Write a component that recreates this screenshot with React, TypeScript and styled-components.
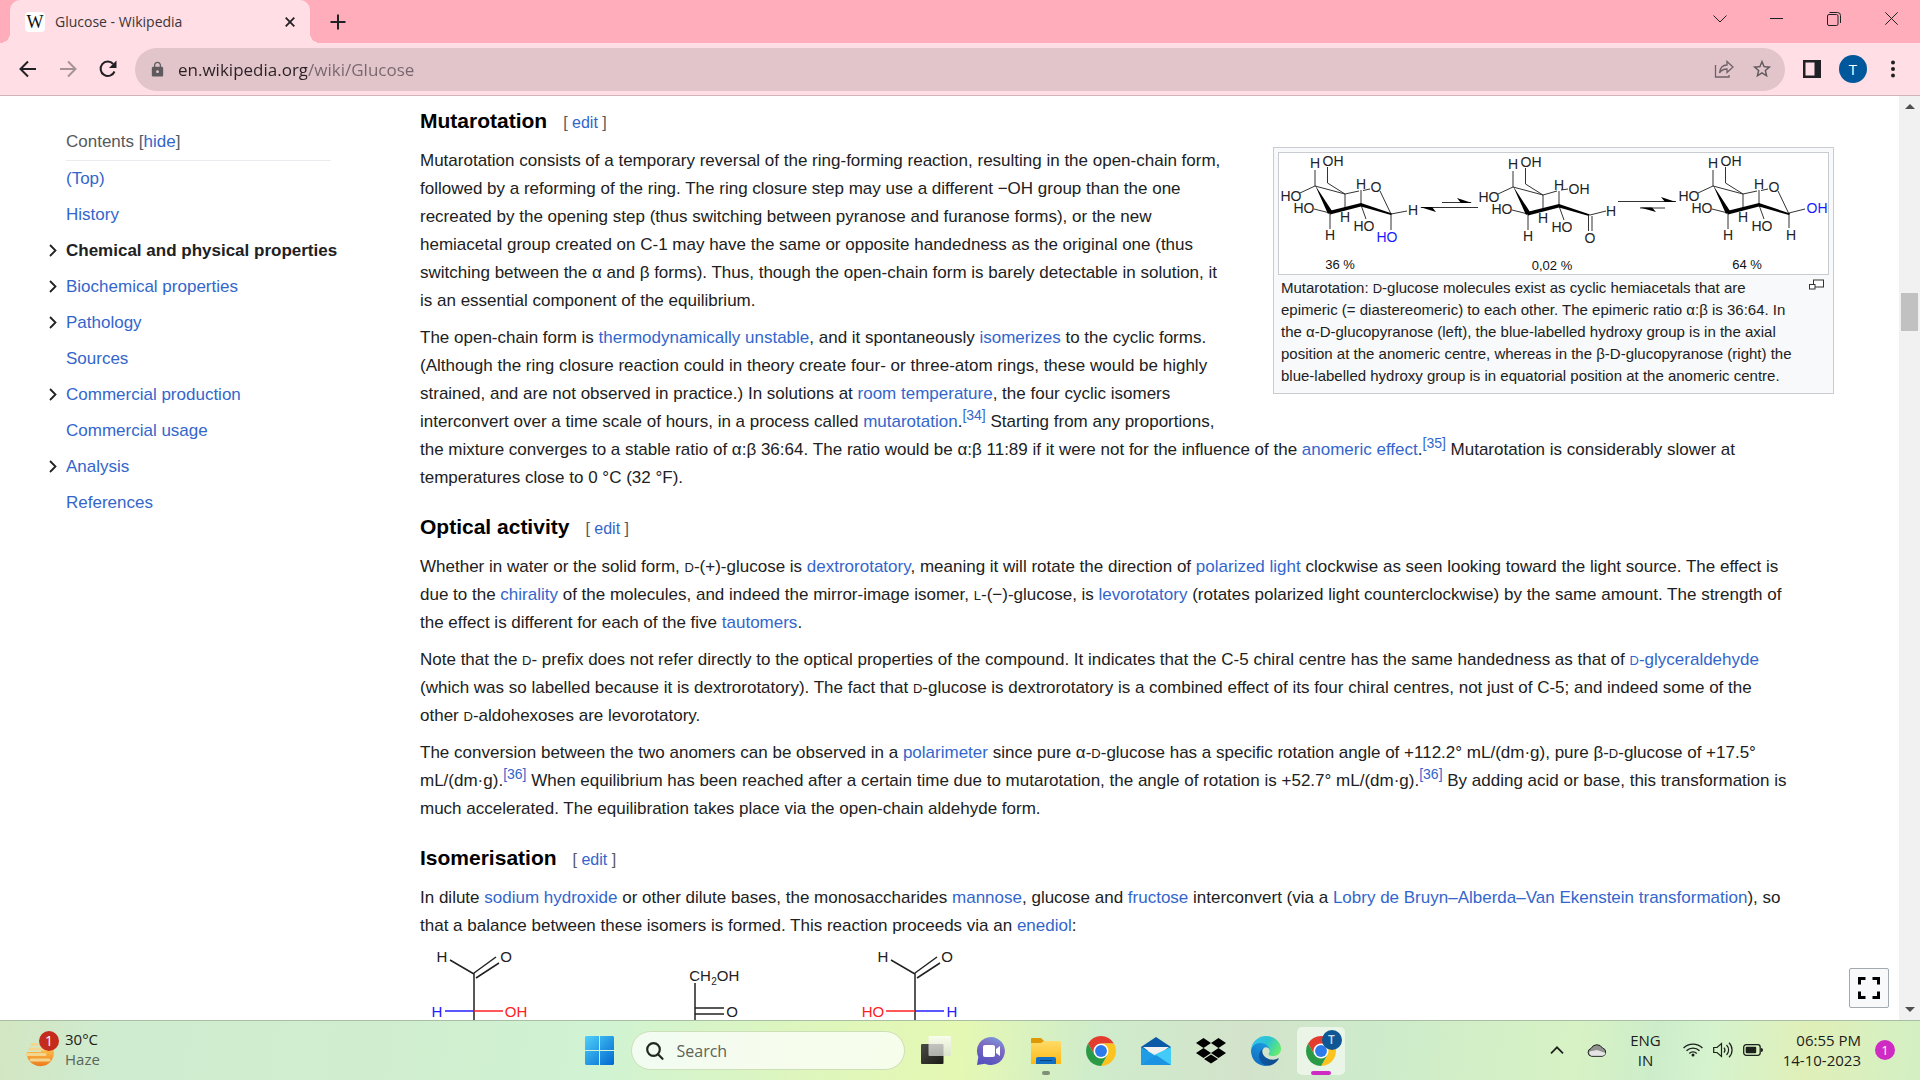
import React from 'react';
import styled, { createGlobalStyle } from 'styled-components';
import { MdLock, MdStarBorder } from 'react-icons/md';

const SANS = '"Liberation Sans", Arial, sans-serif';
const UI = '"Open Sans", "Noto Sans", sans-serif';
const LINK = '#3366cc';

const GlobalStyle = createGlobalStyle`
  *, *::before, *::after { box-sizing: border-box; }
  body { margin: 0; background: #fff; font-family: ${SANS}; }
  button { border: 0; background: none; padding: 0; font: inherit; color: inherit; }
  svg { display: block; flex: none; }
`;

/* ---------- window frame ---------- */

const Window = styled.div`
  display: flex;
  flex-direction: column;
  height: 100vh;
  overflow: hidden;
`;

const TabStrip = styled.header`
  display: flex;
  align-items: center;
  height: 43px;
  flex: none;
  padding-left: 10px;
  background: #ffadbb;
  font-family: ${UI};
`;

const Tab = styled.div`
  position: relative;
  display: flex;
  align-items: center;
  gap: 10px;
  width: 300px;
  height: 43px;
  padding: 0 11px 0 15px;
  border-radius: 10px 10px 0 0;
  background: #ffdfe5;
  color: #3c3337;
  font-size: 14px;

  &::before,
  &::after {
    content: '';
    position: absolute;
    bottom: 0;
    width: 10px;
    height: 10px;
  }
  &::before {
    right: 100%;
    background: radial-gradient(circle at 0 0, #ffadbb 10px, #ffdfe5 10px);
  }
  &::after {
    left: 100%;
    background: radial-gradient(circle at 100% 0, #ffadbb 10px, #ffdfe5 10px);
  }
`;

const Favicon = styled.span`
  width: 20px;
  height: 20px;
  border-radius: 4px;
  background: #fff;
  color: #111;
  font: 18px/20px "Liberation Serif", serif;
  text-align: center;
`;

const TabTitle = styled.span`
  flex: 1;
`;

const IconButton = styled.button<{ $w?: number }>`
  display: flex;
  align-items: center;
  justify-content: center;
  width: ${p => p.$w ?? 32}px;
  height: 32px;
  flex: none;
  color: #202124;
`;

const WindowControls = styled.div`
  display: flex;
  margin-left: auto;
  padding-bottom: 6px;
`;

const Toolbar = styled.nav`
  display: flex;
  align-items: center;
  gap: 8px;
  height: 53px;
  flex: none;
  padding: 0 12px;
  border-bottom: 1px solid #d0b3bb;
  background: #ffdfe5;
  font-family: ${UI};
`;

const Omnibox = styled.label`
  display: flex;
  align-items: center;
  flex: 1;
  height: 43px;
  margin: 0 3px;
  padding: 0 5px 0 14px;
  border-radius: 22px;
  background: #e2c5cb;
  color: #5f5a5e;
`;

const UrlInput = styled.input`
  flex: 1;
  min-width: 0;
  margin-left: 12px;
  padding: 2px 0 0;
  border: 0;
  outline: 0;
  font: 17px/26px ${UI};
  color: transparent;
  background: linear-gradient(90deg, #2a2024 129px, #75666c 129px) text;
`;

const Avatar = styled.button`
  width: 28px;
  height: 28px;
  margin: 0 2px 0 3px;
  border-radius: 50%;
  background: #01579b;
  color: #fff;
  font-size: 15px;
`;

/* ---------- page ---------- */

const Viewport = styled.div`
  position: relative;
  display: flex;
  flex: 1;
  min-height: 0;
  overflow: hidden;
  background: #fff;
`;

const Contents = styled.nav`
  width: 420px;
  flex: none;
  padding: 31px 24px 0 42px;
  font-size: 17px;
`;

const ContentsHead = styled.div`
  width: 265px;
  height: 34px;
  margin-left: 24px;
  border-bottom: 1px solid #eaecf0;
  color: #54595d;
  line-height: 30px;

  button { color: ${LINK}; }
`;

const ContentsList = styled.ul`
  margin: 0;
  padding: 0;
  list-style: none;
`;

const ContentsItem = styled.li`
  display: grid;
  grid-template-columns: 24px 1fr;
  align-items: center;
  height: 36px;
`;

const ContentsLink = styled.a<{ $active?: boolean }>`
  grid-column: 2;
  color: ${p => (p.$active ? '#202122' : LINK)};
  font-weight: ${p => (p.$active ? 700 : 400)};
  text-decoration: none;
  white-space: nowrap;
`;

const Expand = styled.button`
  display: flex;
  justify-content: center;
  width: 24px;
  padding: 0 2px 2px 0;
`;

const Article = styled.article`
  flex: 1;
  min-width: 0;
  padding: 8px 65px 0 0;
  color: #202122;
  font-size: 17px;
  line-height: 28px;
`;

const Heading = styled.h3<{ $first?: boolean }>`
  display: flex;
  align-items: baseline;
  gap: 16px;
  margin: ${p => (p.$first ? 0 : 18)}px 0 7px;
  color: #000;
  font-size: 21px;
  line-height: 34px;
`;

const EditSection = styled.span`
  color: #54595d;
  font-size: 16px;
  font-weight: 400;
`;

const Para = styled.p`
  margin: 0 0 9px;
  padding-right: 42px;
`;

const A = styled.a`
  color: ${LINK};
  text-decoration: none;
`;

const Sup = styled.sup`
  font-size: 14px;
  line-height: 1;
`;

const SmallCap = styled.span`
  font-size: 13px;
  line-height: 1;
`;

const Thumb = styled.figure`
  float: right;
  width: 561px;
  margin: 0 0 22px 44px;
  padding: 4px;
  border: 1px solid #c8ccd1;
  background: #f8f9fa;
`;

const ThumbImage = styled.div`
  border: 1px solid #c8ccd1;
  background: #fff;
`;

const Caption = styled.figcaption`
  display: flex;
  gap: 4px;
  padding: 2px 5px 2px 3px;
  font-size: 15px;
  line-height: 22px;
`;

const CaptionText = styled.span`
  flex: 1;
`;

const Magnify = styled.button`
  align-self: flex-start;
  padding-top: 2px;
`;

const Fullscreen = styled.button`
  position: absolute;
  right: 31px;
  bottom: 12px;
  display: grid;
  place-items: center;
  width: 40px;
  height: 40px;
  border: 1px solid #a2a9b1;
  border-radius: 2px;
  background: #f8f9fa;
`;

const Scrollbar = styled.div`
  display: flex;
  flex-direction: column;
  align-items: center;
  width: 21px;
  flex: none;
  background: #f1f1f1;
`;

const ScrollArrow = styled.button`
  display: grid;
  place-items: center;
  width: 21px;
  height: 21px;
`;

const ScrollGap = styled.div<{ $grow: number }>`
  flex: ${p => p.$grow} 0 0;
`;

const ScrollThumb = styled.div`
  width: 17px;
  height: 38px;
  background: #c1c1c1;
`;

/* ---------- taskbar ---------- */

const Taskbar = styled.footer`
  display: grid;
  grid-template-columns: 1fr auto 1fr;
  align-items: center;
  height: 60px;
  flex: none;
  border-top: 1px solid #a9bfa4;
  background: linear-gradient(96deg, #d3e6c2 0%, #cfecd0 6%, #d0eecf 20%, #d0f3d3 31%, #def6bd 42%, #e5f8b3 50%, #cfeccb 57%, #d3e3cb 65%, #cdebcb 71%, #d7f2c4 82%, #cdedca 86%, #d5f3ce 89%, #e0efb8 94%, #d3f0c4 100%);
  color: #1c211c;
  font: 15px/20px ${UI};
`;

const Weather = styled.button`
  display: flex;
  align-items: center;
  gap: 6px;
  padding: 0 0 4px 24px;
  text-align: left;
`;

const Muted = styled.span`
  color: #5a665a;
`;

const Apps = styled.div`
  display: flex;
  align-items: center;
  gap: 7px;
`;

const AppButton = styled.button<{ $active?: boolean }>`
  position: relative;
  display: grid;
  place-items: center;
  width: 48px;
  height: 48px;
  border-radius: 5px;
  background: ${p => (p.$active ? 'rgba(255,255,255,.55)' : 'none')};
`;

const Running = styled.span<{ $wide?: boolean }>`
  position: absolute;
  bottom: 0;
  left: 50%;
  width: ${p => (p.$wide ? 20 : 8)}px;
  height: 4px;
  transform: translateX(-50%);
  border-radius: 2px;
  background: ${p => (p.$wide ? '#cf2bc4' : '#7f8f78')};
`;

const SearchBox = styled.label`
  display: flex;
  align-items: center;
  gap: 13px;
  width: 274px;
  height: 39px;
  padding: 0 14px;
  border: 1px solid #cddfb6;
  border-radius: 20px;
  background: rgba(255, 255, 255, .72);

  input {
    width: 100%;
    padding: 0;
    border: 0;
    outline: 0;
    background: none;
    font: 16px/22px ${UI};
  }
  input::placeholder { color: #5b6357; opacity: 1; }
`;

const Tray = styled.div`
  display: flex;
  align-items: center;
  justify-content: flex-end;
  padding: 0 25px 2px 0;
`;

const TrayItem = styled.button<{ $gap: number }>`
  margin-right: ${p => p.$gap}px;
`;

const Language = styled(TrayItem)`
  text-align: center;
`;

const Clock = styled(TrayItem)`
  text-align: right;
`;

const Lines = styled.span`
  display: flex;
  flex-direction: column;
`;

const Notifications = styled.button`
  width: 20px;
  height: 20px;
  border-radius: 50%;
  background: #cf2bc4;
  color: #fff;
  font-size: 13px;
`;

/* ---------- chemistry drawings ---------- */

const Drawing = styled.svg`
  width: 100%;
  height: auto;
  font-family: ${SANS};

  text { text-anchor: middle; dominant-baseline: central; }
`;

const FischerDrawing = styled.svg`
  font-family: ${SANS};
  font-size: 15px;

  text { text-anchor: middle; dominant-baseline: central; }
`;

type Kind = 'alpha' | 'open' | 'beta';

function Sugar({ x, y, kind }: { x: number; y: number; kind: Kind }) {
  return (
    <g transform={`translate(${x} ${y})`} fontSize="14" fill="#222">
      <g stroke="#333" strokeWidth="1" fill="none">
        <path d="M36 18V34L66 42V58M48.5 15V31L66 42M21 41 36 34M35 57 51 61V77M82 38V53L87 67" />
        {kind !== 'open' && <path d="M66 42 80 39M84 38.500 91 37M101 39 112 62" />}
        {kind === 'alpha' && <path d="M112 62 128 59M112 62V78" />}
        {kind === 'beta' && <path d="M112 61 128 57M112 61V76" />}
        {kind === 'open' && <path d="M66 42 80 38M84 37 91 36M113 62 129 58M111.500 63V78M115 63V78" />}
      </g>
      <path d="M36 33 53 59 49 62ZM50 59 82 51 82 54.500 51 62.500ZM82 51 113 61.500 112 63 82 54.500Z" fill="#000" />
      <text x="36" y="11">H</text>
      <text x="54" y="9">OH</text>
      <text x="12" y="44">HO</text>
      <text x="25" y="56">HO</text>
      <text x="66" y="65">H</text>
      <text x="51" y="83">H</text>
      <text x="82" y="32">H</text>
      <text x="85" y="74">HO</text>
      {kind !== 'open' && <text x="97" y="35">O</text>}
      {kind === 'alpha' && <><text x="134" y="58">H</text><text x="108" y="85" fill="#1a1aff">HO</text></>}
      {kind === 'beta' && <><text x="114" y="83">H</text><text x="140" y="56" fill="#1a1aff">OH</text></>}
      {kind === 'open' && <><text x="102" y="36">OH</text><text x="134" y="58">H</text><text x="113" y="85">O</text></>}
    </g>
  );
}

function MutarotationDrawing() {
  return (
    <Drawing viewBox="0 1 549 121" role="img" aria-label="Mutarotation of glucose">
      <Sugar x={0} y={0} kind="alpha" />
      <Sugar x={198} y={1} kind="open" />
      <Sugar x={398} y={0} kind="beta" />
      <path d="M163 50.500H192M142 55.500H199M339 49.500H397M361 56H386" stroke="#333" fill="none" />
      <path d="M178 46 193 51H182ZM141 55 157 60 153 55ZM382 45 397 50H386ZM361 55.500 377 60 373 55.500Z" />
      <g fontSize="13" fill="#111">
        <text x="61" y="112">36 %</text>
        <text x="273" y="113">0,02 %</text>
        <text x="468" y="112">64 %</text>
      </g>
    </Drawing>
  );
}

function AldehydeTop({ x, flipped }: { x: number; flipped?: boolean }) {
  const left = flipped ? '#f22' : '#22f';
  const right = flipped ? '#22f' : '#f22';
  return (
    <g transform={`translate(${x} 0)`} fill="#222">
      <path d="M-24 16 0 30V90M0 29 22 13M2 34 25 19" stroke="#222" strokeWidth="1.500" fill="none" />
      <path d="M-29 67H0" stroke={left} strokeWidth="1.500" />
      <path d="M0 67H29" stroke={right} strokeWidth="1.500" />
      <text x="-32" y="12">H</text>
      <text x="32" y="12">O</text>
      <text x={flipped ? -42 : -37} y="67" fill={left}>{flipped ? 'HO' : 'H'}</text>
      <text x={flipped ? 37 : 42} y="67" fill={right}>{flipped ? 'H' : 'OH'}</text>
    </g>
  );
}

function IsomerDrawing() {
  return (
    <FischerDrawing width="560" height="80" viewBox="0 5 560 80" role="img" aria-label="Isomerisation of glucose">
      <AldehydeTop x={54} />
      <AldehydeTop x={495} flipped />
      <g fill="#222">
        <text x="280" y="31">CH</text>
        <text x="294" y="37" fontSize="10">2</text>
        <text x="308" y="31">OH</text>
        <text x="312" y="67">O</text>
        <path d="M275 39V100M275 64H304M275 70H304" stroke="#222" strokeWidth="1.500" fill="none" />
      </g>
    </FischerDrawing>
  );
}

/* ---------- icons ---------- */

const stroke = { fill: 'none', stroke: 'currentColor' } as const;

const BackIcon = () => (
  <svg width="18" height="18" viewBox="0 0 18 18" {...stroke} strokeWidth="2"><path d="M17 9H2M9 1.500 1.500 9 9 16.500" /></svg>
);
const ForwardIcon = () => (
  <svg width="18" height="18" viewBox="0 0 18 18" {...stroke} strokeWidth="2" opacity=".4"><path d="M1 9H16M9 1.500 16.500 9 9 16.500" /></svg>
);
const ReloadIcon = () => (
  <svg width="18" height="18" viewBox="0 0 18 18"><path d="M15.500 11.500A7.200 7.200 0 1 1 14.200 4" {...stroke} strokeWidth="2" /><path d="M17.500 .5V8H10Z" fill="currentColor" /></svg>
);
const CloseTabIcon = () => (
  <svg width="10" height="10" viewBox="0 0 10 10" {...stroke} strokeWidth="1.800"><path d="M.7.700 9.300 9.300M9.300.700.700 9.300" /></svg>
);
const PlusIcon = () => (
  <svg width="16" height="16" viewBox="0 0 16 16" {...stroke} strokeWidth="2"><path d="M8 .5V15.500M.5 8H15.500" /></svg>
);
const ShareIcon = () => (
  <svg width="20" height="20" viewBox="0 0 20 20" fill="none" stroke="#6b6166" strokeWidth="1.300">
    <path d="M1.500 6V18H15V16M5.500 14C6 9.500 8.500 6 13 6V2.500L19 8 13 13.500V10C9.500 10 7 11.500 5.500 14Z" />
  </svg>
);
const PanelIcon = () => (
  <svg width="18" height="18" viewBox="0 0 18 18"><path fillRule="evenodd" d="M0 0H18V18H0ZM2.500 2.500V15.500H11.500V2.500Z" fill="#202124" /></svg>
);
const DotsIcon = () => (
  <svg width="4" height="18" viewBox="0 0 4 18" fill="#202124"><circle cx="2" cy="2.500" r="2" /><circle cx="2" cy="9" r="2" /><circle cx="2" cy="15.500" r="2" /></svg>
);
const ChevronIcon = () => (
  <svg width="14" height="8" viewBox="0 0 14 8" {...stroke} strokeWidth="1"><path d="M.5.500 7 7 13.500.500" /></svg>
);
const MinimizeIcon = () => (
  <svg width="13" height="1" viewBox="0 0 13 1"><path d="M0 0H13V1H0Z" fill="currentColor" /></svg>
);
const RestoreIcon = () => (
  <svg width="14" height="14" viewBox="0 0 14 14" {...stroke}><rect x=".5" y="2.500" width="10.500" height="11" rx="1.500" /><path d="M2.500.500H10.500A3 3 0 0 1 13.500 3.500V11" /></svg>
);
const CloseIcon = () => (
  <svg width="13" height="13" viewBox="0 0 13 13" {...stroke}><path d="M.3.300 12.700 12.700M12.700.300.300 12.700" /></svg>
);
const ExpandIcon = () => (
  <svg width="8" height="13" viewBox="0 0 8 13" fill="none" stroke="#202122" strokeWidth="1.800"><path d="M1 1 6.500 6.500 1 12" /></svg>
);
const MagnifyIcon = () => (
  <svg width="15" height="11" viewBox="0 0 15 11" fill="#fff" stroke="#333"><rect x="4.500" y="1" width="10" height="7" /><rect x=".5" y="5.500" width="5.500" height="4.500" /></svg>
);
const FullscreenIcon = () => (
  <svg width="24" height="24" viewBox="0 0 24 24" fill="none" stroke="#000" strokeWidth="3"><path d="M2.500 8.500V2.500H8.500M15.500 2.500H21.500V8.500M21.500 15.500V21.500H15.500M8.500 21.500H2.500V15.500" /></svg>
);
const ArrowIcon = ({ down }: { down?: boolean }) => (
  <svg width="10" height="5" viewBox="0 0 10 5" fill="#505050"><path d={down ? 'M0 0H10L5 5Z' : 'M0 5H10L5 0Z'} /></svg>
);

const HazeIcon = () => (
  <svg width="35" height="38" viewBox="0 0 35 38">
    <defs><linearGradient id="sun" x2="0" y2="1"><stop offset="0" stopColor="#ffc04a" /><stop offset="1" stopColor="#ec7a1c" /></linearGradient></defs>
    <path d="M3 22H17V19H29.500A13.500 13.500 0 0 1 3 26Z" fill="url(#sun)" />
    <path d="M8 14.500H13M6 19H26M3 24.500H21M7 30H25" stroke="#f4d58e" strokeWidth="3" strokeLinecap="round" />
    <circle cx="25" cy="11" r="10" fill="#c42b1c" />
    <text x="25" y="16" fontSize="14" fill="#fff" textAnchor="middle">1</text>
  </svg>
);
const StartIcon = () => (
  <svg width="29" height="29" viewBox="0 0 29 29">
    <defs><linearGradient id="win" x2="1" y2="1"><stop offset="0" stopColor="#4fd0fb" /><stop offset="1" stopColor="#0067cf" /></linearGradient></defs>
    <path d="M1 0H14V14H0V1ZM15 0H28L29 1V14H15ZM0 15H14V29H1L0 28ZM15 15H29V28L28 29H15Z" fill="url(#win)" />
  </svg>
);
const SearchIcon = () => (
  <svg width="18" height="18" viewBox="0 0 18 18" fill="none" stroke="#22271f" strokeWidth="2.200" strokeLinecap="round"><circle cx="7.500" cy="7.500" r="6.300" /><path d="M12 12.300 16.500 16.800" /></svg>
);
const TaskViewIcon = () => (
  <svg width="30" height="29" viewBox="0 0 30 29">
    <defs>
      <linearGradient id="tvd" x2="1" y2="1"><stop offset="0" stopColor="#4a4a46" /><stop offset="1" stopColor="#1a1a18" /></linearGradient>
      <linearGradient id="tvl" x2="0" y2="1"><stop offset="0" stopColor="#fff" /><stop offset="1" stopColor="#d9dcd3" /></linearGradient>
    </defs>
    <rect x="0" y="8" width="22.500" height="20" rx="1" fill="url(#tvd)" />
    <rect x="7.500" y="0" width="22.500" height="20" rx="1" fill="url(#tvl)" opacity=".75" />
  </svg>
);
const ChatIcon = () => (
  <svg width="30" height="30" viewBox="0 0 30 30">
    <defs><linearGradient id="chat" x1=".7" x2=".3" y2="1"><stop offset="0" stopColor="#7b9ade" /><stop offset=".35" stopColor="#7d6cc0" /><stop offset="1" stopColor="#5450c0" /></linearGradient></defs>
    <path d="M15 1A14 14 0 1 1 9 27.700L1 29 2.300 21A14 14 0 0 1 15 1Z" fill="url(#chat)" />
    <rect x="7" y="9" width="12" height="12" rx="2" fill="#fff" /><path d="M20 13 24 10V20L20 17Z" fill="#fff" />
  </svg>
);
const FolderIcon = () => (
  <svg width="30" height="28" viewBox="0 0 30 28">
    <defs><linearGradient id="fold" x2="0" y2="1"><stop offset="0" stopColor="#ffdc68" /><stop offset="1" stopColor="#fbb914" /></linearGradient></defs>
    <path d="M0 2Q0 1 1 1H10L13 4V8H0Z" fill="#dd9a05" /><path d="M0 6H10L13 4H29L30 5V27H0Z" fill="url(#fold)" />
    <path d="M5 27V22Q5 20 7 20H23Q25 20 25 22V27Z" fill="#1270c4" /><path d="M9 23.500H21" stroke="#0b4379" />
  </svg>
);
const ChromeIcon = () => (
  <svg width="30" height="30" viewBox="0 0 48 48">
    <circle cx="24" cy="24" r="12" fill="#fff" />
    <path d="M24 12H44.780a24 24 0 0 0-41.560 0L13.610 30A12 12 0 0 1 24 12Z" fill="#e33b2e" />
    <path d="M34.390 30 24 48A24 24 0 0 0 44.780 12H24A12 12 0 0 1 34.390 30Z" fill="#fcc31e" />
    <path d="M13.610 30 3.220 12A24 24 0 0 0 24 48L34.390 30A12 12 0 0 1 13.610 30Z" fill="#2a9a47" />
    <circle cx="24" cy="24" r="9.500" fill="#2d7bea" />
  </svg>
);
const MailIcon = () => (
  <svg width="30" height="28" viewBox="0 0 30 28">
    <path d="M0 10 15 0 30 10V14H0Z" fill="#0a5aa8" /><path d="M2 10H28L15 20Z" fill="#f1f1f1" />
    <path d="M0 10 15 19 30 28H0Z" fill="#1f9ce8" /><path d="M30 10V28L13 18Z" fill="#41cbf6" /><path d="M0 28 15 18 30 28Z" fill="#1b93e0" />
  </svg>
);
const DropboxIcon = () => (
  <svg width="30" height="26" viewBox="0 0 30 26"><path d="M7.500 0 15 5 7.500 10 0 5ZM22.500 0 30 5 22.500 10 15 5ZM7.500 10 15 15 7.500 20 0 15ZM22.500 10 30 15 22.500 20 15 15ZM15 16.500 22 21 15 25.500 8 21Z" /></svg>
);
const EdgeIcon = () => (
  <svg width="30" height="30" viewBox="4.500 4.800 256 256">
    <defs>
      <linearGradient id="e1" x1="0" x2="1"><stop offset="0" stopColor="#0c59a4" /><stop offset="1" stopColor="#114a8b" /></linearGradient>
      <linearGradient id="e2" x1=".8" y1="0" x2=".3" y2="1"><stop offset="0" stopColor="#1b9de2" /><stop offset="1" stopColor="#0f6cc0" /></linearGradient>
      <linearGradient id="e3" x1="0" y1=".2" x2="1" y2=".6"><stop offset="0" stopColor="#35c1f1" /><stop offset=".5" stopColor="#2bc4d0" /><stop offset="1" stopColor="#66eb6e" /></linearGradient>
    </defs>
    <path fill="url(#e1)" d="M235.680 195.460a93.730 93.730 0 0 1-10.540 4.710 101.870 101.870 0 0 1-35.900 6.460c-47.320 0-88.540-32.550-88.540-74.320A31.480 31.480 0 0 1 117.130 105c-42.800 1.800-53.800 46.400-53.800 72.530 0 73.880 68.090 81.370 82.760 81.370 7.910 0 19.840-2.300 27-4.560l1.310-.44a128.340 128.340 0 0 0 66.600-52.800 4 4 0 0 0-5.320-5.640Z" />
    <path fill="url(#e2)" d="M110.340 246.340A79.200 79.200 0 0 1 87.600 225a80.720 80.720 0 0 1 29.530-120c3.120-1.470 8.450-4.130 15.540-4a32.350 32.350 0 0 1 25.690 13 31.880 31.880 0 0 1 6.360 18.660c0-.21 24.460-79.600-80-79.600-43.900 0-80 41.660-80 78.210a130.150 130.150 0 0 0 12.110 56 128 128 0 0 0 156.380 67.110 75.550 75.550 0 0 1-62.780-8Z" />
    <path fill="url(#e3)" d="M156.940 153.780c-.81 1.050-3.300 2.500-3.300 5.660 0 2.610 1.700 5.120 4.720 7.230 14.380 10 41.490 8.680 41.560 8.680a59.560 59.560 0 0 0 30.270-8.350A61.380 61.380 0 0 0 260.600 114c.26-22.410-8-37.310-11.340-43.910-21.190-41.450-66.930-65.290-116.670-65.290a128 128 0 0 0-128 126.200c.48-36.540 36.800-66.050 80-66.050 3.500 0 23.460.34 42 10.070 16.340 8.580 24.900 18.940 30.850 29.210 6.180 10.670 7.280 24.150 7.280 29.520s-2.740 13.330-7.800 20Z" />
  </svg>
);
const ProfileBadge = styled.span`
  position: absolute;
  top: 3px;
  right: 3px;
  width: 20px;
  height: 20px;
  border-radius: 50%;
  background: #0f5694;
  color: #c5dcee;
  font-size: 12px;
  font-weight: 600;
`;
const TrayChevron = () => (
  <svg width="14" height="8" viewBox="0 0 14 8" fill="none" stroke="#1c211c" strokeWidth="1.700"><path d="M1 7.300 7 1.300 13 7.300" /></svg>
);
const CloudIcon = () => (
  <svg width="20" height="14" viewBox="0 0 20 14">
    <path d="M4.500 13.300A4 4 0 0 1 4 5.500 6.500 6.500 0 0 1 15.500 5 4.300 4.300 0 0 1 15.500 13.300Z" fill="#8f928f" stroke="#222" />
    <path d="M4.500 12.700A3.500 3.500 0 0 1 2.500 8.500L10 7 18.500 10Q18 12.700 15.500 12.700Z" fill="#e4e4e4" />
  </svg>
);
const WifiIcon = () => (
  <svg width="20" height="15" viewBox="0 0 20 15" fill="none" stroke="#1c211c" strokeWidth="1.400">
    <path d="M.6 6A13.300 13.300 0 0 1 19.400 6M3.500 8.800A9.200 9.200 0 0 1 16.500 8.800M6.300 11.400A5.200 5.200 0 0 1 13.700 11.400" /><circle cx="10" cy="13" r="1.500" fill="#1c211c" stroke="none" />
  </svg>
);
const VolumeIcon = () => (
  <svg width="20" height="16" viewBox="0 0 20 16" fill="none" stroke="#1c211c" strokeWidth="1.200">
    <path d="M.7 5.500H4L8.500 1.500V14.500L4 10.500H.7ZM11 5.500A4 4 0 0 1 11 10.500M13.500 3A7 7 0 0 1 13.500 13M16 .8A10 10 0 0 1 16 15.200" />
  </svg>
);
const BatteryIcon = () => (
  <svg width="20" height="12" viewBox="0 0 20 12"><rect x=".7" y=".7" width="16.500" height="10.600" rx="2.500" fill="none" stroke="#1c211c" strokeWidth="1.300" /><rect x="2.700" y="2.700" width="10.500" height="6.600" rx="1" fill="#1c211c" /><path d="M18 4Q20 4 20 6T18 8Z" fill="#1c211c" /></svg>
);

/* ---------- content ---------- */

const sections = [
  { title: '(Top)' },
  { title: 'History' },
  { title: 'Chemical and physical properties', expandable: true, active: true },
  { title: 'Biochemical properties', expandable: true },
  { title: 'Pathology', expandable: true },
  { title: 'Sources' },
  { title: 'Commercial production', expandable: true },
  { title: 'Commercial usage' },
  { title: 'Analysis', expandable: true },
  { title: 'References' },
];

const Link = ({ children }: { children: React.ReactNode }) => <A href="#">{children}</A>;
const Ref = ({ n }: { n: number }) => <Sup><A href="#">[{n}]</A></Sup>;
const D = () => <SmallCap>D</SmallCap>;

const SectionHeading = ({ title, first }: { title: string; first?: boolean }) => (
  <Heading $first={first}>
    {title}
    <EditSection>[ <A href="#">edit</A> ]</EditSection>
  </Heading>
);

const apps = [
  { name: 'Task view', icon: <TaskViewIcon /> },
  { name: 'Chat', icon: <ChatIcon /> },
  { name: 'File Explorer', icon: <FolderIcon />, running: true },
  { name: 'Google Chrome', icon: <ChromeIcon /> },
  { name: 'Mail', icon: <MailIcon /> },
  { name: 'Dropbox', icon: <DropboxIcon /> },
  { name: 'Microsoft Edge', icon: <EdgeIcon /> },
];

export default function App() {
  return (
    <Window>
      <GlobalStyle />
      <TabStrip>
        <Tab>
          <Favicon>W</Favicon>
          <TabTitle>Glucose - Wikipedia</TabTitle>
          <IconButton $w={18} aria-label="Close tab"><CloseTabIcon /></IconButton>
        </Tab>
        <IconButton $w={55} aria-label="New tab"><PlusIcon /></IconButton>
        <WindowControls>
          <IconButton $w={57} aria-label="Search tabs"><ChevronIcon /></IconButton>
          <IconButton $w={57} aria-label="Minimize"><MinimizeIcon /></IconButton>
          <IconButton $w={57} aria-label="Restore"><RestoreIcon /></IconButton>
          <IconButton $w={58} aria-label="Close"><CloseIcon /></IconButton>
        </WindowControls>
      </TabStrip>

      <Toolbar>
        <IconButton aria-label="Back"><BackIcon /></IconButton>
        <IconButton aria-label="Forward"><ForwardIcon /></IconButton>
        <IconButton aria-label="Reload"><ReloadIcon /></IconButton>
        <Omnibox>
          <MdLock size={17} />
          <UrlInput aria-label="Address" defaultValue="en.wikipedia.org/wiki/Glucose" />
          <IconButton $w={40} aria-label="Share"><ShareIcon /></IconButton>
          <IconButton $w={36} aria-label="Bookmark"><MdStarBorder size={22} color="#5f5a5e" /></IconButton>
        </Omnibox>
        <IconButton $w={32} aria-label="Side panel"><PanelIcon /></IconButton>
        <Avatar aria-label="Profile">T</Avatar>
        <IconButton $w={31} aria-label="Menu"><DotsIcon /></IconButton>
      </Toolbar>

      <Viewport>
        <Contents aria-label="Contents">
          <ContentsHead>Contents <span>[<button>hide</button>]</span></ContentsHead>
          <ContentsList>
            {sections.map(s => (
              <ContentsItem key={s.title}>
                {s.expandable && <Expand aria-label={`Toggle ${s.title}`}><ExpandIcon /></Expand>}
                <ContentsLink href="#" $active={s.active}>{s.title}</ContentsLink>
              </ContentsItem>
            ))}
          </ContentsList>
        </Contents>

        <Article>
          <SectionHeading title="Mutarotation" first />
          <Thumb>
            <ThumbImage><MutarotationDrawing /></ThumbImage>
            <Caption>
              <CaptionText>
                Mutarotation: <SmallCap>D</SmallCap>-glucose molecules exist as cyclic hemiacetals that are epimeric (= diastereomeric) to each other. The epimeric ratio α:β is 36:64. In the α-D-glucopyranose (left), the blue-labelled hydroxy group is in the axial position at the anomeric centre, whereas in the β-D-glucopyranose (right) the blue-labelled hydroxy group is in equatorial position at the anomeric centre.
              </CaptionText>
              <Magnify aria-label="Enlarge"><MagnifyIcon /></Magnify>
            </Caption>
          </Thumb>
          <Para>
            Mutarotation consists of a temporary reversal of the ring-forming reaction, resulting in the open-chain form, followed by a reforming of the ring. The ring closure step may use a different −OH group than the one recreated by the opening step (thus switching between pyranose and furanose forms), or the new hemiacetal group created on C-1 may have the same or opposite handedness as the original one (thus switching between the α and β forms). Thus, though the open-chain form is barely detectable in solution, it is an essential component of the equilibrium.
          </Para>
          <Para>
            The open-chain form is <Link>thermodynamically unstable</Link>, and it spontaneously <Link>isomerizes</Link> to the cyclic forms. (Although the ring closure reaction could in theory create four- or three-atom rings, these would be highly strained, and are not observed in practice.) In solutions at <Link>room temperature</Link>, the four cyclic isomers interconvert over a time scale of hours, in a process called <Link>mutarotation</Link>.<Ref n={34} /> Starting from any proportions, the mixture converges to a stable ratio of α:β 36:64. The ratio would be α:β 11:89 if it were not for the influence of the <Link>anomeric effect</Link>.<Ref n={35} /> Mutarotation is considerably slower at temperatures close to 0 °C (32 °F).
          </Para>

          <SectionHeading title="Optical activity" />
          <Para>
            Whether in water or the solid form, <D />-(+)-glucose is <Link>dextrorotatory</Link>, meaning it will rotate the direction of <Link>polarized light</Link> clockwise as seen looking toward the light source. The effect is due to the <Link>chirality</Link> of the molecules, and indeed the mirror-image isomer, <SmallCap>L</SmallCap>-(−)-glucose, is <Link>levorotatory</Link> (rotates polarized light counterclockwise) by the same amount. The strength of the effect is different for each of the five <Link>tautomers</Link>.
          </Para>
          <Para>
            Note that the <D />- prefix does not refer directly to the optical properties of the compound. It indicates that the C-5 chiral centre has the same handedness as that of <Link><D />-glyceraldehyde</Link> (which was so labelled because it is dextrorotatory). The fact that <D />-glucose is dextrorotatory is a combined effect of its four chiral centres, not just of C-5; and indeed some of the other <D />-aldohexoses are levorotatory.
          </Para>
          <Para>
            The conversion between the two anomers can be observed in a <Link>polarimeter</Link> since pure α-<D />-glucose has a specific rotation angle of +112.2° mL/(dm·g), pure β-<D />-glucose of +17.5° mL/(dm·g).<Ref n={36} /> When equilibrium has been reached after a certain time due to mutarotation, the angle of rotation is +52.7° mL/(dm·g).<Ref n={36} /> By adding acid or base, this transformation is much accelerated. The equilibration takes place via the open-chain aldehyde form.
          </Para>

          <SectionHeading title="Isomerisation" />
          <Para>
            In dilute <Link>sodium hydroxide</Link> or other dilute bases, the monosaccharides <Link>mannose</Link>, glucose and <Link>fructose</Link> interconvert (via a <Link>Lobry de Bruyn–Alberda–Van Ekenstein transformation</Link>), so that a balance between these isomers is formed. This reaction proceeds via an <Link>enediol</Link>:
          </Para>
          <IsomerDrawing />
        </Article>

        <Scrollbar>
          <ScrollArrow aria-label="Scroll up"><ArrowIcon /></ScrollArrow>
          <ScrollGap $grow={176} />
          <ScrollThumb />
          <ScrollGap $grow={668} />
          <ScrollArrow aria-label="Scroll down"><ArrowIcon down /></ScrollArrow>
        </Scrollbar>
        <Fullscreen aria-label="Toggle limited content width"><FullscreenIcon /></Fullscreen>
      </Viewport>

      <Taskbar>
        <Weather>
          <HazeIcon />
          <Lines><span>30°C</span><Muted>Haze</Muted></Lines>
        </Weather>
        <Apps>
          <AppButton aria-label="Start"><StartIcon /></AppButton>
          <SearchBox><SearchIcon /><input aria-label="Search" placeholder="Search" /></SearchBox>
          {apps.map(a => (
            <AppButton key={a.name} aria-label={a.name}>{a.icon}{a.running && <Running />}</AppButton>
          ))}
          <AppButton $active aria-label="Glucose - Wikipedia">
            <ChromeIcon />
            <ProfileBadge>T</ProfileBadge>
            <Running $wide />
          </AppButton>
        </Apps>
        <Tray>
          <TrayItem $gap={23} aria-label="Hidden icons"><TrayChevron /></TrayItem>
          <TrayItem $gap={23} aria-label="OneDrive"><CloudIcon /></TrayItem>
          <Language $gap={22}><Lines><span>ENG</span><span>IN</span></Lines></Language>
          <TrayItem $gap={10} aria-label="Wi-Fi"><WifiIcon /></TrayItem>
          <TrayItem $gap={10} aria-label="Volume"><VolumeIcon /></TrayItem>
          <TrayItem $gap={20} aria-label="Battery"><BatteryIcon /></TrayItem>
          <Clock $gap={14}><Lines><span>06:55 PM</span><span>14-10-2023</span></Lines></Clock>
          <Notifications aria-label="1 notification">1</Notifications>
        </Tray>
      </Taskbar>
    </Window>
  );
}
